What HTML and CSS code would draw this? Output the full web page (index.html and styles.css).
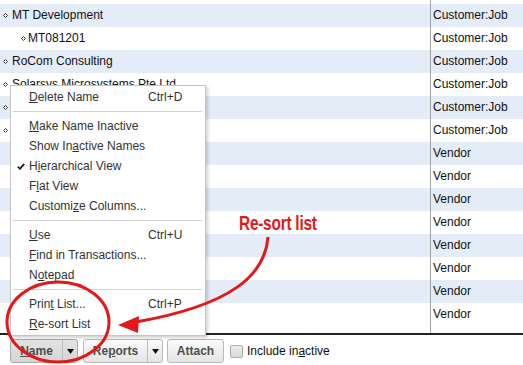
FILE: index.html
```html
<!DOCTYPE html>
<html>
<head>
<meta charset="utf-8">
<link rel="stylesheet" href="styles.css">
</head>
<body>
<div class="window">
  <div class="list">
    <div class="row partial"><div class="name"></div><div class="type"></div></div>
    <div class="row alt"><div class="name l1"><svg class="dia" width="5" height="5" viewBox="0 0 5 5"><path d="M2.5 0.5L4.5 2.5L2.5 4.5L0.5 2.5Z"/></svg><span>MT Development</span></div><div class="type">Customer:Job</div></div>
    <div class="row"><div class="name l2"><svg class="dia" width="5" height="5" viewBox="0 0 5 5"><path d="M2.5 0.5L4.5 2.5L2.5 4.5L0.5 2.5Z"/></svg><span>MT081201</span></div><div class="type">Customer:Job</div></div>
    <div class="row alt"><div class="name l1"><svg class="dia" width="5" height="5" viewBox="0 0 5 5"><path d="M2.5 0.5L4.5 2.5L2.5 4.5L0.5 2.5Z"/></svg><span>RoCom Consulting</span></div><div class="type">Customer:Job</div></div>
    <div class="row"><div class="name l1"><svg class="dia" width="5" height="5" viewBox="0 0 5 5"><path d="M2.5 0.5L4.5 2.5L2.5 4.5L0.5 2.5Z"/></svg><span>Solarsys Microsystems Pte Ltd</span></div><div class="type">Customer:Job</div></div>
    <div class="row alt"><div class="name l1"><svg class="dia" width="5" height="5" viewBox="0 0 5 5"><path d="M2.5 0.5L4.5 2.5L2.5 4.5L0.5 2.5Z"/></svg></div><div class="type">Customer:Job</div></div>
    <div class="row"><div class="name l1"><svg class="dia" width="5" height="5" viewBox="0 0 5 5"><path d="M2.5 0.5L4.5 2.5L2.5 4.5L0.5 2.5Z"/></svg></div><div class="type">Customer:Job</div></div>
    <div class="row alt"><div class="name"></div><div class="type">Vendor</div></div>
    <div class="row"><div class="name"></div><div class="type">Vendor</div></div>
    <div class="row alt"><div class="name"></div><div class="type">Vendor</div></div>
    <div class="row"><div class="name"></div><div class="type">Vendor</div></div>
    <div class="row alt"><div class="name"></div><div class="type">Vendor</div></div>
    <div class="row"><div class="name"></div><div class="type">Vendor</div></div>
    <div class="row alt"><div class="name"></div><div class="type">Vendor</div></div>
    <div class="row"><div class="name"></div><div class="type">Vendor</div></div>
    <div class="row filler"><div class="name"></div><div class="type"></div></div>
  </div>

  <div class="toolbar">
    <div class="split pressed">
      <span class="btn-main"><u>N</u>ame</span>
      <span class="btn-drop"><svg width="7" height="5" viewBox="0 0 7 5"><path d="M0 0H7L3.5 5Z"/></svg></span>
    </div>
    <div class="split">
      <span class="btn-main wide">Re<u>p</u>orts</span>
      <span class="btn-drop"><svg width="7" height="5" viewBox="0 0 7 5"><path d="M0 0H7L3.5 5Z"/></svg></span>
    </div>
    <div class="button">Attach</div>
    <label class="check"><span class="box"></span><span>Include in<u>a</u>ctive</span></label>
  </div>

  <div class="menu">
    <div class="item"><span><u>D</u>elete Name</span><span>Ctrl+D</span></div>
    <div class="sep"></div>
    <div class="item"><span><u>M</u>ake Name Inactive</span><span></span></div>
    <div class="item"><span>Show In<u>a</u>ctive Names</span><span></span></div>
    <div class="item checked"><svg class="tick" width="8" height="7" viewBox="0 0 8 7"><path d="M0.8 3.6L3 5.8L7.2 0.8" /></svg><span>H<u>i</u>erarchical View</span><span></span></div>
    <div class="item"><span>F<u>l</u>at View</span><span></span></div>
    <div class="item"><span>Customi<u>z</u>e Columns...</span><span></span></div>
    <div class="sep"></div>
    <div class="item"><span><u>U</u>se</span><span>Ctrl+U</span></div>
    <div class="item"><span><u>F</u>ind in Transactions...</span><span></span></div>
    <div class="item"><span>N<u>o</u>tepad</span><span></span></div>
    <div class="sep"></div>
    <div class="item"><span>Prin<u>t</u> List...</span><span>Ctrl+P</span></div>
    <div class="item"><span><u>R</u>e-sort List</span><span></span></div>
  </div>

  <div class="callout">Re-sort list</div>

  <svg class="annot" width="523" height="365" viewBox="0 0 523 365">
    <ellipse cx="58" cy="322" rx="51" ry="40" />
    <path class="curve" d="M268 237C265 275 232 305 136 322" />
    <path class="head" d="M118 325L139 316L138 333Z" />
  </svg>
</div>
</body>
</html>
```

FILE: styles.css
```css
* { box-sizing: border-box; }
html, body {
  margin: 0;
  padding: 0;
  background: #fff;
}
body {
  font-family: "Liberation Sans", Arial, sans-serif;
  font-size: 12px;
  color: #111;
}
.window {
  position: relative;
  width: 523px;
  height: 365px;
  overflow: hidden;
}
.list {
  display: flex;
  flex-direction: column;
  height: 335px;
  border-bottom: 2px solid #222;
}
.row {
  display: grid;
  grid-template-columns: 430px 1fr;
  height: 23px;
  line-height: 23px;
  flex: none;
}
.row.partial { height: 4px; }
.row.filler { flex: 1; height: auto; }
.row.alt { background: #e4ecf8; }
.name {
  display: flex;
  align-items: center;
  white-space: nowrap;
  overflow: hidden;
}
.name.l1 { padding-left: 3px; gap: 4px; }
.name.l2 { padding-left: 21px; gap: 2px; }
.dia path {
  fill: #fff;
  stroke: #333;
  stroke-width: 1;
}
.type {
  border-left: 1px solid #a3a3a3;
  padding-left: 2px;
  white-space: nowrap;
}

.toolbar {
  display: flex;
  align-items: center;
  padding: 4px 0 0 10px;
  height: 28px;
}
.split, .button {
  display: flex;
  height: 24px;
  border: 1px solid #b9b9b9;
  border-radius: 3px;
  background: linear-gradient(#fbfbfb, #e4e4e4);
  font-weight: bold;
  color: #4d4d4d;
  line-height: 22px;
}
.split { margin-right: 5px; }
.split + .split { margin-right: 4px; }
.split.pressed {
  background: linear-gradient(#e2e2e2, #d6d6d6);
  border-color: #a9a9a9;
}
.btn-main {
  width: 51px;
  text-align: center;
}
.btn-main.wide { width: 63px; }
.btn-drop {
  width: 15px;
  border-left: 1px solid #bdbdbd;
  display: flex;
  align-items: center;
  justify-content: center;
}
.btn-drop path { fill: #111; }
.button {
  width: 57px;
  justify-content: center;
  margin-right: 6px;
}
.check {
  display: flex;
  align-items: center;
  gap: 4px;
  color: #111;
}
.box {
  width: 13px;
  height: 13px;
  border: 1px solid #ababab;
  border-radius: 2px;
  background: linear-gradient(#ececec, #dadada);
}

.menu {
  position: absolute;
  left: 10px;
  top: 85px;
  width: 196px;
  padding: 1px 0;
  background: #fff;
  border: 1px solid #c4c4c4;
  box-shadow: 2px 2px 3px rgba(0, 0, 0, 0.18);
  color: #333;
}
.item {
  position: relative;
  display: grid;
  grid-template-columns: 119px 1fr;
  height: 20px;
  line-height: 20px;
  padding-left: 18px;
  white-space: nowrap;
}
.tick {
  position: absolute;
  left: 6px;
  top: 7px;
}
.tick path {
  fill: none;
  stroke: #222;
  stroke-width: 1.8;
}
.sep {
  margin: 4px 3px 4px 2px;
  border-top: 1px solid #d2d2d2;
}

.callout {
  position: absolute;
  left: 239px;
  top: 212px;
  font-family: "Liberation Sans", sans-serif;
  font-weight: bold;
  font-size: 20px;
  line-height: 22px;
  letter-spacing: -0.3px;
  color: #e31919;
  white-space: nowrap;
  transform: scaleX(0.77);
  transform-origin: 0 50%;
}
.annot {
  position: absolute;
  left: 0;
  top: 0;
  pointer-events: none;
}
.annot ellipse, .annot .curve {
  fill: none;
  stroke: #e31919;
  stroke-width: 3;
}
.annot .head {
  fill: #e31919;
}
```
